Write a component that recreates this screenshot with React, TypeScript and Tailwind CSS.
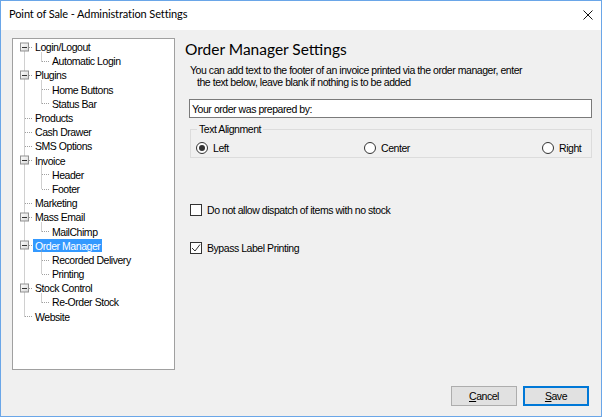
import React from "react";

type Node = { label: string; level: 0 | 1; exp?: boolean; sel?: boolean };

const nodes: Node[] = [
  { label: "Login/Logout", level: 0, exp: true },
  { label: "Automatic Login", level: 1 },
  { label: "Plugins", level: 0, exp: true },
  { label: "Home Buttons", level: 1 },
  { label: "Status Bar", level: 1 },
  { label: "Products", level: 0 },
  { label: "Cash Drawer", level: 0 },
  { label: "SMS Options", level: 0 },
  { label: "Invoice", level: 0, exp: true },
  { label: "Header", level: 1 },
  { label: "Footer", level: 1 },
  { label: "Marketing", level: 0 },
  { label: "Mass Email", level: 0, exp: true },
  { label: "MailChimp", level: 1 },
  { label: "Order Manager", level: 0, exp: true, sel: true },
  { label: "Recorded Delivery", level: 1 },
  { label: "Printing", level: 1 },
  { label: "Stock Control", level: 0, exp: true },
  { label: "Re-Order Stock", level: 1 },
  { label: "Website", level: 0 },
];

const ROW = 14.2;
const cy = (i: number) => Math.floor(1 + ROW * i + 7.1) + 0.5;

function TreeLines() {
  const lines: React.ReactNode[] = [];
  const dot = { stroke: "#a0a0a0", strokeWidth: 1, strokeDasharray: "1 1" };
  const last0 = nodes.length - 1;
  lines.push(<line key="root" x1={11.5} y1={cy(0)} x2={11.5} y2={cy(last0)} {...dot} />);
  nodes.forEach((n, i) => {
    const y = cy(i);
    if (n.level === 0) {
      lines.push(<line key={"h" + i} x1={n.exp ? 16 : 12} y1={y} x2={20} y2={y} {...dot} />);
      if (n.exp) {
        let j = i + 1;
        while (j < nodes.length && nodes[j].level === 1) j++;
        const lastChild = j - 1;
        if (lastChild > i) {
          lines.push(<line key={"v" + i} x1={28.5} y1={y + 5} x2={28.5} y2={cy(lastChild)} {...dot} />);
        }
      }
    } else {
      lines.push(<line key={"h" + i} x1={29} y1={y} x2={37} y2={y} {...dot} />);
    }
  });
  nodes.forEach((n, i) => {
    if (n.exp) {
      const y = cy(i);
      lines.push(
        <g key={"b" + i}>
          <rect x={7.5} y={y - 4.5} width={8} height={8} fill="url(#bg)" stroke="#919191" />
          <line x1={9} y1={y} x2={14} y2={y} stroke="#333" />
        </g>
      );
    }
  });
  return (
    <svg className="absolute inset-0 pointer-events-none" width="161" height="330">
      <defs>
        <linearGradient id="bg" x1="0" y1="0" x2="1" y2="1">
          <stop offset="0" stopColor="#ffffff" />
          <stop offset="1" stopColor="#d6d6d6" />
        </linearGradient>
      </defs>
      {lines}
    </svg>
  );
}

function Radio({ checked, label }: { checked?: boolean; label: string }) {
  return (
    <div className="flex items-center h-[13px]">
      <span className="w-[12px] h-[12px] rounded-full border border-[#333] bg-white flex items-center justify-center">
        {checked && <span className="w-[6px] h-[6px] rounded-full bg-[#333]" />}
      </span>
      <span className="ml-[5px]">{label}</span>
    </div>
  );
}

function Check({ checked, label }: { checked?: boolean; label: string }) {
  return (
    <div className="flex items-center h-[14px]">
      <span className="w-[12px] h-[12px] border border-[#333] bg-white flex items-center justify-center">
        {checked && (
          <svg width="10" height="10" viewBox="0 0 10 10">
            <path d="M1 5 L4 8 L9 1.5" fill="none" stroke="#333" strokeWidth="1" />
          </svg>
        )}
      </span>
      <span className="ml-[5px]">{label}</span>
    </div>
  );
}

export default function App() {
  return (
    <div className="w-[602px] h-[417px] border border-[#6aa6e8] flex flex-col font-['Liberation_Sans',sans-serif] text-[10.5px] tracking-[-0.45px] leading-[12px] text-black">
      <div className="h-[29px] bg-white flex items-center justify-between pl-[8px] pr-[8px] pb-[3px] shrink-0">
        <span className="font-['Lato',sans-serif] text-[11px] tracking-[-0.1px]">Point of Sale - Administration Settings</span>
        <svg width="10" height="10" viewBox="0 0 10 10" className="mt-[2px]">
          <path d="M0.5 0.5 L9.5 9.5 M9.5 0.5 L0.5 9.5" stroke="#111" strokeWidth="1" />
        </svg>
      </div>
      <div className="flex-1 bg-[#f0f0f0] flex flex-col pt-[8px] pl-[11px] pr-[12px] pb-[10px]">
        <div className="flex">
          <div className="w-[163px] h-[332px] border border-[#a0a0a0] bg-white shrink-0">
            <div className="relative w-full h-full pt-[1px]">
              <TreeLines />
              {nodes.map((n, i) => (
                <div key={i} className="h-[14.2px] flex items-center">
                  <span
                    className={
                      (n.level === 0 ? "ml-[20px] " : "ml-[37px] ") +
                      "px-[2px] h-[13px] flex items-center " +
                      (n.sel ? "bg-[#3399ff] text-white" : "")
                    }
                  >
                    {n.label}
                  </span>
                </div>
              ))}
            </div>
          </div>
          <div className="ml-[10px] flex-1 flex flex-col">
            <div className="mt-[1px] h-[20px] leading-[20px] text-[15.5px] tracking-normal font-['Lato',sans-serif]">
              Order Manager Settings
            </div>
            <div className="mt-[5px] pl-[5px]">
              <div>You can add text to the footer of an invoice printed via the order manager, enter</div>
              <div className="pl-[7px]">the text below, leave blank if nothing is to be added</div>
            </div>
            <div className="mt-[11px] ml-[4px] w-[403px] h-[19px] bg-white border border-[#7a7a7a] flex items-center pl-[2px]">
              Your order was prepared by:
            </div>
            <fieldset className="mt-[5px] ml-[5px] w-[402px] border border-[#dcdcdc] pb-[3px]">
              <legend className="ml-[6px] px-[2px] leading-[12px]">Text Alignment</legend>
              <div className="mt-[6px] flex pl-[5px]">
                <div className="w-[168px]"><Radio checked label="Left" /></div>
                <div className="w-[178px]"><Radio label="Center" /></div>
                <div><Radio label="Right" /></div>
              </div>
            </fieldset>
            <div className="mt-[45px] ml-[5px]">
              <Check label="Do not allow dispatch of items with no stock" />
            </div>
            <div className="mt-[24px] ml-[5px]">
              <Check checked label="Bypass Label Printing" />
            </div>
          </div>
        </div>
        <div className="mt-[16px] flex justify-end">
          <button className="w-[66px] h-[20px] bg-[#e1e1e1] border border-[#adadad] flex items-center justify-center">
            <span><span className="underline">C</span>ancel</span>
          </button>
          <button className="ml-[6px] w-[66px] h-[20px] bg-[#e1e1e1] border border-[#0078d7] shadow-[inset_0_0_0_1px_#0078d7] flex items-center justify-center">
            <span><span className="underline">S</span>ave</span>
          </button>
        </div>
      </div>
    </div>
  );
}
